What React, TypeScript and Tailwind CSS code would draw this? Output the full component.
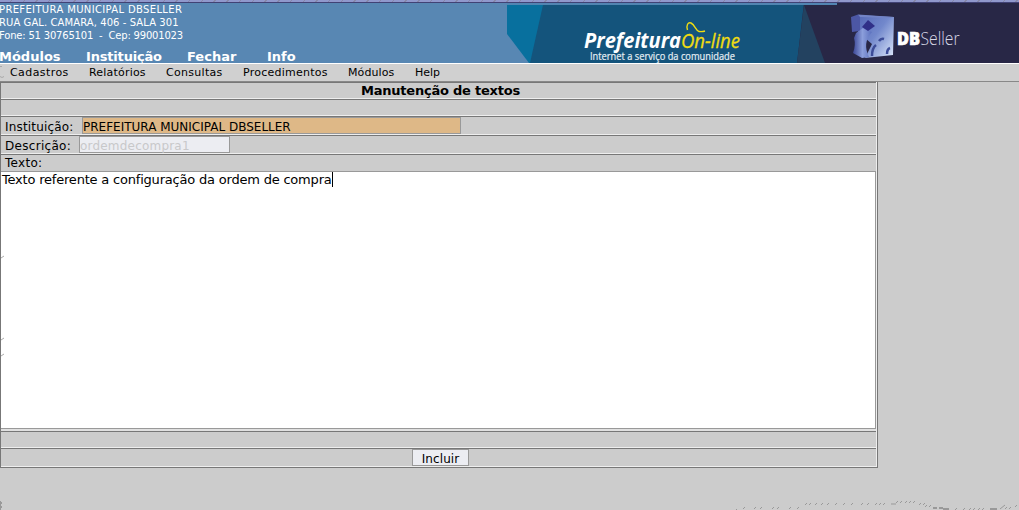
import React from "react";

const systemMenus = [
  { label: "Módulos", box: "-ml-px w-[87px]" },
  { label: "Instituição", box: "w-[101px] tracking-[-0.18px]" },
  { label: "Fechar", box: "w-[80px]" },
  { label: "Info", box: "w-[60px]" },
];

const moduleMenus = [
  { label: "Cadastros", box: "w-[79px] tracking-[0.42px]" },
  { label: "Relatórios", box: "w-[77px] tracking-[0.2px]" },
  { label: "Consultas", box: "w-[77px] tracking-[0.3px]" },
  { label: "Procedimentos", box: "w-[105px] tracking-[0.25px]" },
  { label: "Módulos", box: "w-[67px] tracking-[0.1px]" },
  { label: "Help", box: "w-[60px]" },
];

function Banner() {
  return (
    <svg width="512" height="60" viewBox="507 3 512 60" className="shrink-0">
      <defs>
        <linearGradient id="cube" x1="0" y1="0" x2="1" y2="0.9">
          <stop offset="0" stopColor="#5568b6" />
          <stop offset="0.5" stopColor="#7288cc" />
          <stop offset="1" stopColor="#d5e1f7" />
        </linearGradient>
        <linearGradient id="stem" x1="0" y1="0" x2="1" y2="0">
          <stop offset="0" stopColor="#3c4795" />
          <stop offset="0.5" stopColor="#8b9edb" />
          <stop offset="1" stopColor="#5a6fbd" />
        </linearGradient>
      </defs>
      <rect x="507" y="3" width="512" height="60" fill="#282746" />
      <path d="M507 3H804L797 63H507Z" fill="#14547c" />
      <path d="M804 5L825 63H797Z" fill="#234260" />
      <path d="M507 5H543L530 63H507Z" fill="#08709e" />
      <path d="M507 34L529 63H507Z" fill="#5887b3" />
      <rect x="507" y="3" width="330" height="2" fill="#5285b2" />
      <text x="584" y="48" fill="#fff" fontFamily="Open Sans" fontWeight="700" fontStyle="italic" fontSize="20.500" textLength="97" lengthAdjust="spacingAndGlyphs">Prefeitura</text>
      <text x="681" y="48" fill="#f0dc12" stroke="#f0dc12" strokeWidth="0.300" fontFamily="Open Sans" fontStyle="italic" fontSize="20.500" textLength="59" lengthAdjust="spacingAndGlyphs">On-line</text>
      <path d="M687.500 30C686 25 688 22 691 23C695 25 696 31 699 31.500Q702 32 705 31" fill="none" stroke="#f0dc12" strokeWidth="1.400" />
      <text x="590" y="59.500" fill="#e6eef4" stroke="#e6eef4" strokeWidth="0.200" fontFamily="Open Sans" fontSize="10" textLength="145" lengthAdjust="spacingAndGlyphs">Internet a serviço da comunidade</text>
      <path d="M858 15L894 17L893 55L865 58L872 44L858 32Z" fill="url(#cube)" />
      <path d="M851 17L858 14.500L860 16V31L852 32Z" fill="#4c57a5" />
      <path d="M858 14.500L894 17L890 18L860 17Z" fill="#7384c6" />
      <path d="M856 33L863 28L872 32Q862 43 869 57L862 58L853 53Q856 45 854 38Z" fill="url(#stem)" />
      <path d="M868 20L875 26L868 31L862 27Z" fill="#303088" />
      <path d="M872 56Q872 48 876 45M879 41Q881 38 884 39M887 54Q887 49 890 48" fill="none" stroke="#3c4c98" strokeWidth="2.500" />
      <text x="897" y="45" fill="#fff" stroke="#fff" strokeWidth="0.700" fontFamily="Open Sans" fontWeight="800" fontSize="18" textLength="23" lengthAdjust="spacingAndGlyphs">DB</text>
      <text x="920.500" y="45" fill="#d9d9e7" fontFamily="Open Sans" fontWeight="300" fontSize="18" textLength="39" lengthAdjust="spacingAndGlyphs">Seller</text>
    </svg>
  );
}

export default function App() {
  return (
    <div className="flex h-[510px] w-[1019px] flex-col overflow-hidden bg-[#ccc] font-['DejaVu_Sans',sans-serif] text-black">
      <div className="h-[3px] shrink-0 border-b border-[#414275] bg-[#9098cc] bg-[repeating-linear-gradient(135deg,#9098cc_0px,#9098cc_8px,#8788a8_8px,#8788a8_9px)]" />
      <header className="flex h-[60px] shrink-0 justify-between bg-[#5887b3] text-white">
        <div className="flex flex-col whitespace-nowrap">
          <div className="-ml-px h-[45px] shrink-0 text-[10px] leading-[13px]">
            <p className="tracking-[0.35px]">PREFEITURA MUNICIPAL DBSELLER</p>
            <p className="tracking-[0.08px]">RUA GAL. CAMARA, 406 - SALA 301</p>
            <p className="whitespace-pre tracking-[-0.19px]">Fone: 51 30765101  -  Cep: 99001023</p>
          </div>
          <nav className="flex h-[15px] shrink-0 text-[13px] leading-[17px] font-bold">
            {systemMenus.map((m) => <span key={m.label} className={m.box}>{m.label}</span>)}
          </nav>
        </div>
        <Banner />
      </header>
      <nav className="flex h-[19px] shrink-0 border-t border-b border-t-white border-b-[#888] bg-[#d0d0d0] text-[11px] leading-[17px] whitespace-nowrap">
        <svg width="10" height="17" fill="none" stroke="#aaa"><path d="M0 2.500h2M0 12.500l2 1 2-1" /></svg>
        {moduleMenus.map((m) => <span key={m.label} className={m.box}>{m.label}</span>)}
      </nav>
      <main className="flex h-[386px] w-[878px] shrink-0 flex-col border-r border-b border-l border-[#777] whitespace-nowrap">
        <div className="flex min-h-0 flex-1 flex-col border-r border-[#eee]">
          <h1 className="h-[17px] shrink-0 border-t border-b border-t-[#777] border-b-[#eee] pl-[4px] text-center text-[13px] leading-[15px] font-bold tracking-[-0.22px]">Manutenção de textos</h1>
          <div className="h-[17px] shrink-0 border-t border-b border-t-[#777] border-b-[#eee]" />
          <div className="flex h-[19px] shrink-0 border-t border-b border-t-[#777] border-b-[#eee] pl-[4px] text-[12px] leading-[20px]">
            <label className="w-[77px] tracking-[0.18px]">Instituição:</label>
            <div className="h-[17px] w-[379px] border border-[#999] bg-[#deb887] leading-[18px]">PREFEITURA MUNICIPAL DBSELLER</div>
          </div>
          <div className="flex h-[19px] shrink-0 border-t border-b border-t-[#777] border-b-[#eee] pl-[4px] text-[12px] leading-[20px]">
            <label className="w-[74px] tracking-[0.3px]">Descrição:</label>
            <div className="h-[17px] w-[151px] border border-[#999] bg-[#ecedf2] leading-[18px] tracking-[0.2px] text-[#c8c8ca]">ordemdecompra1</div>
          </div>
          <div className="h-[17px] shrink-0 border-t border-[#777] pl-[4px] text-[12px] leading-[16px] tracking-[0.3px]">Texto:</div>
          <div className="relative flex h-[258px] shrink-0 border-t border-r border-b border-[#999] bg-white pl-px text-[13px] leading-[16px]">
            <span className="tracking-[-0.2px]">Texto referente a configuração da ordem de compra</span><span className="h-[15px] w-px bg-black" />
            <svg className="absolute top-[83px] left-0" width="3" height="103" fill="none" stroke="#aaa"><path d="M0 3l3-2M0 85l3-2M0 101l3-2" /></svg>
          </div>
          <div className="h-[2px] shrink-0 bg-[#e0e0e0]" />
          <div className="h-[17px] shrink-0 border-t border-b border-t-[#777] border-b-[#eee]" />
          <div className="flex h-[19px] shrink-0 justify-center border-t border-b border-t-[#777] border-b-[#eee] pl-[4px]">
            <button className="h-[17px] w-[57px] border border-[#999] bg-[#ecedf2] text-[12px] leading-[18px] tracking-[0.1px]">Incluir</button>
          </div>
        </div>
      </main>
      <footer className="flex flex-1 items-end justify-between">
        <svg width="2" height="9"><path d="M0 0h1v1h1v2h-1v2h1v2h-1v2h-1z" fill="#999" /></svg>
        <svg width="283" height="10" viewBox="736 500 283 10" fill="none" stroke="#999">
          <path d="M736 509.500h1m6-.5l2-2m9 2l2-2m4 2l2-2m10 2l2-2m3 2l2-2m10 2l2-2m6 2l2-2" />
          <path d="M805 505l2-2m2 2l2-2m4 2l2-2m4 2l2-2m4 2l2-2m6 2l2-2m6 2l2-2m6 2l2-2m8 2l2-2m4 2l2-2m6 2l2-2m2 2l2-2m2 2l2-2" />
          <path d="M891 504h5M896 503l2-2m2 2l2-2m3 2l2-2m2 2l2-2m2 2l2-2M919 505l2-2m2 2l2-2m0 4l2-2m2 2l2-2" />
          <path d="M933 508h4M939 508h4M943 509h6M990 509h7" strokeWidth="2" />
          <path d="M955 510l2-2m6 2l2-2m4 2l2-2m2 2l2-2m3 2l2-2m2 2l2-2M1000 509l5-4m0 4l2-2m2 2l2-2m4 0l2-2" />
        </svg>
      </footer>
    </div>
  );
}
